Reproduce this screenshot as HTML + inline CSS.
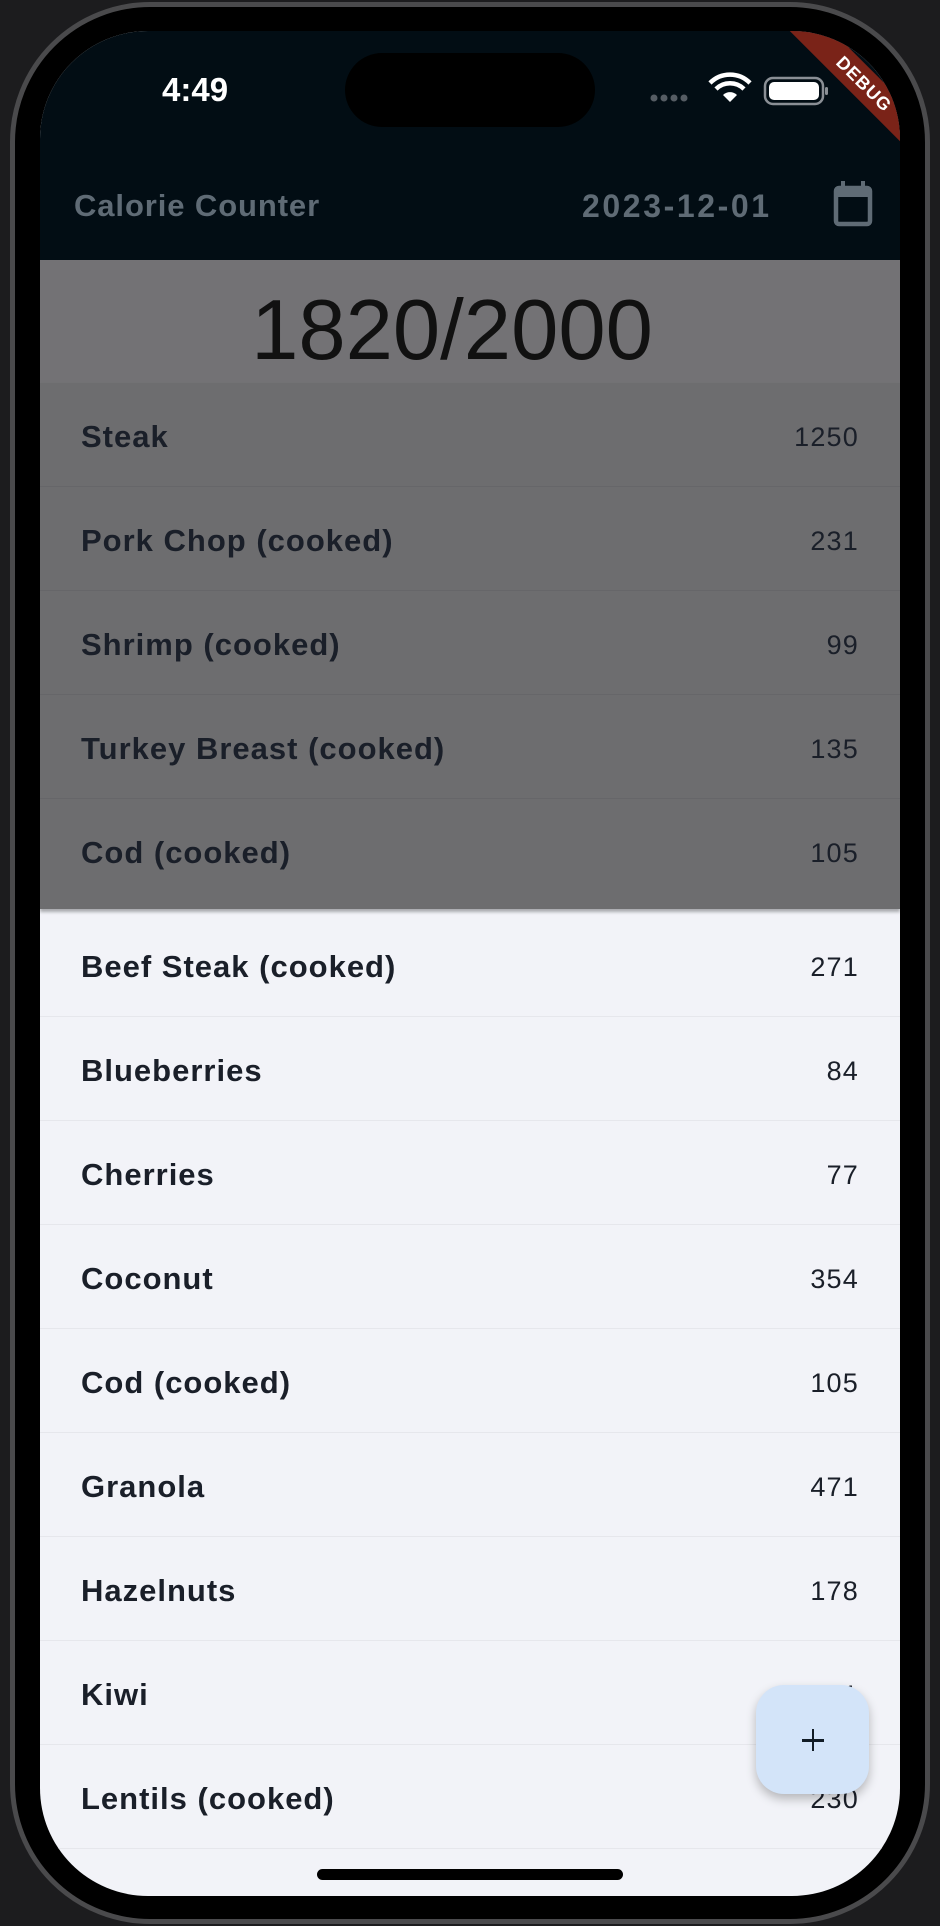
<!DOCTYPE html>
<html><head><meta charset="utf-8"><style>
*{margin:0;padding:0;box-sizing:border-box}
body{width:940px;height:1926px;background:#1c1c1e;position:relative;overflow:hidden;font-family:"Liberation Sans",sans-serif}
.phone{position:absolute;left:10px;top:2px;width:920px;height:1922px;border-radius:140px;background:#000;border:5px solid #4a4a4c}
.screen{position:absolute;left:40px;top:31px;width:860px;height:1865px;border-radius:108px;overflow:hidden;background:#f2f3f8}
.bar{position:absolute;left:0;top:0;width:860px;height:229px;background:#020d14}
.row{position:absolute;left:0;width:860px;height:104px;border-bottom:1px solid #e6e7ec}
.row .n{position:absolute;left:41px;top:2px;line-height:104px;font-size:31px;letter-spacing:1px;font-weight:bold;color:#1a1f29}
.row .c{position:absolute;right:41px;top:2px;line-height:104px;font-size:27px;letter-spacing:1.2px;color:#1a1f29}
.ov .row{border-bottom:1px solid #666669}
</style></head><body>
<div class="phone"></div>
<div class="screen">
 <div class="bar"></div>
 <div style="position:absolute;left:122px;top:40px;color:#fff;font-size:33px;font-weight:bold">4:49</div>
 <div style="position:absolute;left:305px;top:22px;width:250px;height:74px;border-radius:37px;background:#000"></div>
 <svg style="position:absolute;left:610px;top:40px" width="190" height="40" viewBox="0 0 190 40">
  <g fill="#555c63"><circle cx="4" cy="27" r="3.5"/><circle cx="14" cy="27" r="3.5"/><circle cx="24" cy="27" r="3.5"/><circle cx="34" cy="27" r="3.5"/></g>
  <g transform="translate(9,0)">
  <path d="M71 31 L64 24 A10 10 0 0 1 78 24 Z" fill="#fff"/>
  <path d="M57 18 A20 20 0 0 1 85 18" stroke="#fff" stroke-width="4.5" fill="none"/>
  <path d="M51 12 A28 28 0 0 1 91 12" stroke="#fff" stroke-width="4.5" fill="none"/>
  </g>
  <rect x="115" y="7" width="58" height="26" rx="8" fill="none" stroke="#8a8f95" stroke-width="2.5"/>
  <rect x="119" y="11" width="50" height="18" rx="5" fill="#fff"/>
  <rect x="175" y="16" width="3" height="8" rx="1.5" fill="#8a8f95"/>
 </svg>
 <div style="position:absolute;left:34px;top:157px;color:#5f6b75;font-size:31px;letter-spacing:0.9px;font-weight:bold">Calorie Counter</div>
 <div style="position:absolute;left:542px;top:157px;color:#5f6b75;font-size:32px;letter-spacing:2.6px;font-weight:bold">2023-12-01</div>
 <svg style="position:absolute;left:793px;top:150px" width="40" height="46" viewBox="0 0 40 46"><rect x="3" y="7" width="34" height="36" rx="3" fill="none" stroke="#5f6b75" stroke-width="4.5"/><rect x="3" y="7" width="34" height="9" fill="#5f6b75"/><rect x="8" y="0" width="4" height="9" fill="#5f6b75"/><rect x="28" y="0" width="4" height="9" fill="#5f6b75"/></svg>
 <div style="position:absolute;left:0;top:229px;width:860px;height:123px;background:#737275"></div>
 <div style="position:absolute;left:-18px;top:238px;width:860px;height:123px;text-align:center;font-size:85px;line-height:123px;color:#111;z-index:2">1820/2000</div>
 <div class="ov" style="position:absolute;left:0;top:352px;width:860px;height:526px;background:#6d6d6f;box-shadow:0 3px 3px rgba(0,0,0,.3)">
  <div class="row" style="top:0"><span class="n">Steak</span><span class="c">1250</span></div>
  <div class="row" style="top:104px"><span class="n">Pork Chop (cooked)</span><span class="c">231</span></div>
  <div class="row" style="top:208px"><span class="n">Shrimp (cooked)</span><span class="c">99</span></div>
  <div class="row" style="top:312px"><span class="n">Turkey Breast (cooked)</span><span class="c">135</span></div>
  <div class="row" style="top:416px;border:none"><span class="n">Cod (cooked)</span><span class="c">105</span></div>
 </div>
 <div style="position:absolute;left:0;top:882px;width:860px">
  <div class="row" style="top:0"><span class="n">Beef Steak (cooked)</span><span class="c">271</span></div>
  <div class="row" style="top:104px"><span class="n">Blueberries</span><span class="c">84</span></div>
  <div class="row" style="top:208px"><span class="n">Cherries</span><span class="c">77</span></div>
  <div class="row" style="top:312px"><span class="n">Coconut</span><span class="c">354</span></div>
  <div class="row" style="top:416px"><span class="n">Cod (cooked)</span><span class="c">105</span></div>
  <div class="row" style="top:520px"><span class="n">Granola</span><span class="c">471</span></div>
  <div class="row" style="top:624px"><span class="n">Hazelnuts</span><span class="c">178</span></div>
  <div class="row" style="top:728px"><span class="n">Kiwi</span><span class="c">61</span></div>
  <div class="row" style="top:832px"><span class="n">Lentils (cooked)</span><span class="c">230</span></div>
 </div>
 <div style="position:absolute;left:716px;top:1654px;width:113px;height:109px;border-radius:28px;background:#d3e4f9;box-shadow:0 5px 10px rgba(0,0,0,.25)">
  <div style="position:absolute;left:46px;top:54px;width:22px;height:2.5px;background:#111c26"></div>
  <div style="position:absolute;left:55.8px;top:44px;width:2.5px;height:22px;background:#111c26"></div>
 </div>
 <div style="position:absolute;left:277px;top:1838px;width:306px;height:11px;border-radius:6px;background:#000"></div>
 <div style="position:absolute;left:724px;top:38px;width:200px;height:30px;background:#7a2318;transform:rotate(45deg);color:#fff;font-size:18px;font-weight:bold;text-align:center;line-height:30px;letter-spacing:1px">DEBUG</div>
</div>
</body></html>
